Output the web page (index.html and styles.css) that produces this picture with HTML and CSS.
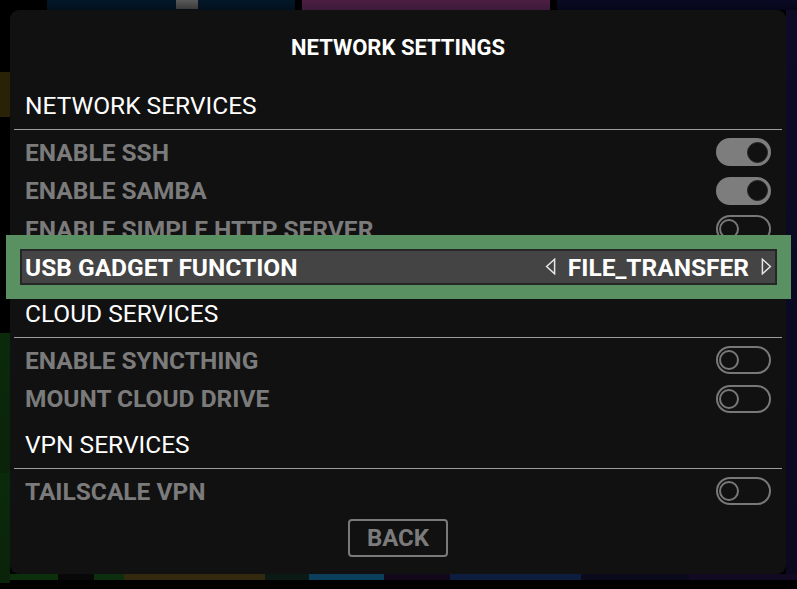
FILE: index.html
```html
<!DOCTYPE html>
<html>
<head>
<meta charset="utf-8">
<link rel="stylesheet" href="styles.css">
</head>
<body>
<div class="dialog">
  <div class="title">NETWORK SETTINGS</div>

  <div class="section-head">NETWORK SERVICES</div>
  <div class="row"><span class="label">ENABLE SSH</span><span class="toggle on"></span></div>
  <div class="row"><span class="label">ENABLE SAMBA</span><span class="toggle on"></span></div>
  <div class="row"><span class="label">ENABLE SIMPLE HTTP SERVER</span><span class="toggle"></span></div>
  <div class="row selected">
    <span class="label">USB GADGET FUNCTION</span>
    <span class="value">
      <svg class="arrow" width="11" height="17" viewBox="0 0 11 17"><path d="M9.6 1.2 L1.6 8.5 L9.6 15.8 Z" fill="none" stroke="#e6e6e6" stroke-width="1.5" stroke-linejoin="miter"/></svg>
      <span class="value-text">FILE_TRANSFER</span>
      <svg class="arrow" width="11" height="17" viewBox="0 0 11 17"><path d="M1.4 1.2 L9.4 8.5 L1.4 15.8 Z" fill="none" stroke="#e6e6e6" stroke-width="1.5" stroke-linejoin="miter"/></svg>
    </span>
  </div>

  <div class="section-head">CLOUD SERVICES</div>
  <div class="row"><span class="label">ENABLE SYNCTHING</span><span class="toggle"></span></div>
  <div class="row"><span class="label">MOUNT CLOUD DRIVE</span><span class="toggle"></span></div>

  <div class="section-head">VPN SERVICES</div>
  <div class="row"><span class="label">TAILSCALE VPN</span><span class="toggle"></span></div>

  <div class="footer"><span class="back">BACK</span></div>
</div>
</body>
</html>
```

FILE: styles.css
```css
html, body {
  margin: 0;
  padding: 0;
}
body {
  width: 797px;
  height: 589px;
  box-sizing: border-box;
  padding: 10px 11px 15px 10px;
  overflow: hidden;
  font-family: Roboto, "Liberation Sans", sans-serif;
  background-color: #000;
  background-image:
    linear-gradient(#5a5a5a, #3a3a3a),
    linear-gradient(#03182a, #02101c),
    linear-gradient(#4d1f42, #3d1a3a),
    linear-gradient(#0b0a24, #06061a),
    linear-gradient(#2a2206, #2a2206),
    linear-gradient(#0b2a0b, #0a230a),
    linear-gradient(#0b2a0b, #0a230a),
    linear-gradient(90deg, #0c300c 0 11%, #080808 11% 19%, #0c2f0f 19% 26%, #33290f 26% 58%, #0b1a14 58% 68%, #0b3f5c 68% 85%, #12081a 85% 100%),
    linear-gradient(90deg, #0d1d40 0 40%, #0a0a1c 40% 70%, #120a22 70% 100%),
    linear-gradient(#0d0b26, #0a0920);
  background-size:
    22px 9px,
    248px 10px,
    248px 10px,
    240px 10px,
    10px 45px,
    10px 140px,
    10px 110px,
    440px 6px,
    360px 6px,
    11px 580px;
  background-position:
    176px 0,
    47px 0,
    302px 0,
    557px 0,
    0 72px,
    0 333px,
    0 473px,
    10px 574px,
    437px 574px,
    786px 0;
  background-repeat: no-repeat;
}

.dialog {
  height: 564px;
  box-sizing: border-box;
  background: #111111;
  border-radius: 9px;
  padding: 0 4px;
  display: flex;
  flex-direction: column;
}

.title {
  height: 69px;
  box-sizing: border-box;
  padding-top: 5px;
  display: flex;
  align-items: center;
  justify-content: center;
  color: #ffffff;
  font-weight: 700;
  font-size: 22px;
}

.section-head {
  height: 51px;
  box-sizing: border-box;
  padding: 2px 11px 0;
  display: flex;
  align-items: center;
  color: #ffffff;
  font-size: 24.5px;
  border-bottom: 1px solid #9c9c9c;
  margin-bottom: 3px;
}

.row {
  height: 38.5px;
  box-sizing: border-box;
  padding: 0 11px;
  display: flex;
  align-items: center;
  justify-content: space-between;
  font-size: 24.5px;
  font-weight: 700;
  color: #7b7b7b;
}

.row.selected {
  position: relative;
  z-index: 1;
  height: 36px;
  margin: 0 5px 2.5px 6px;
  padding: 2px 3px 0 3px;
  border: 2px solid #262626;
  background: #444444;
  box-shadow: 0 0 0 14px #5a9163;
  color: #ffffff;
}

.value {
  display: flex;
  align-items: center;
  gap: 12px;
}

.arrow {
  display: block;
  margin-top: -2px;
}

.toggle {
  position: relative;
  width: 55px;
  height: 28px;
  box-sizing: border-box;
  border-radius: 14px;
  border: 2px solid #787878;
  flex: none;
}

.toggle::after {
  content: "";
  position: absolute;
  left: 1px;
  top: 50%;
  width: 20px;
  height: 20px;
  box-sizing: border-box;
  margin-top: -10px;
  border-radius: 50%;
  border: 2px solid #787878;
}

.toggle.on {
  background: #7d7d7d;
  border-color: #7d7d7d;
}

.toggle.on::after {
  left: auto;
  right: 1px;
  width: 21px;
  height: 21px;
  margin-top: -10.5px;
  background: #111111;
  border: 1px solid #222;
}

.footer {
  display: flex;
  justify-content: center;
  padding-top: 8.5px;
}

.back {
  width: 100px;
  height: 38px;
  box-sizing: border-box;
  border: 2px solid #7a7a7a;
  border-radius: 4px;
  display: flex;
  align-items: center;
  justify-content: center;
  color: #7b7b7b;
  font-size: 24px;
  font-weight: 700;
}
```
